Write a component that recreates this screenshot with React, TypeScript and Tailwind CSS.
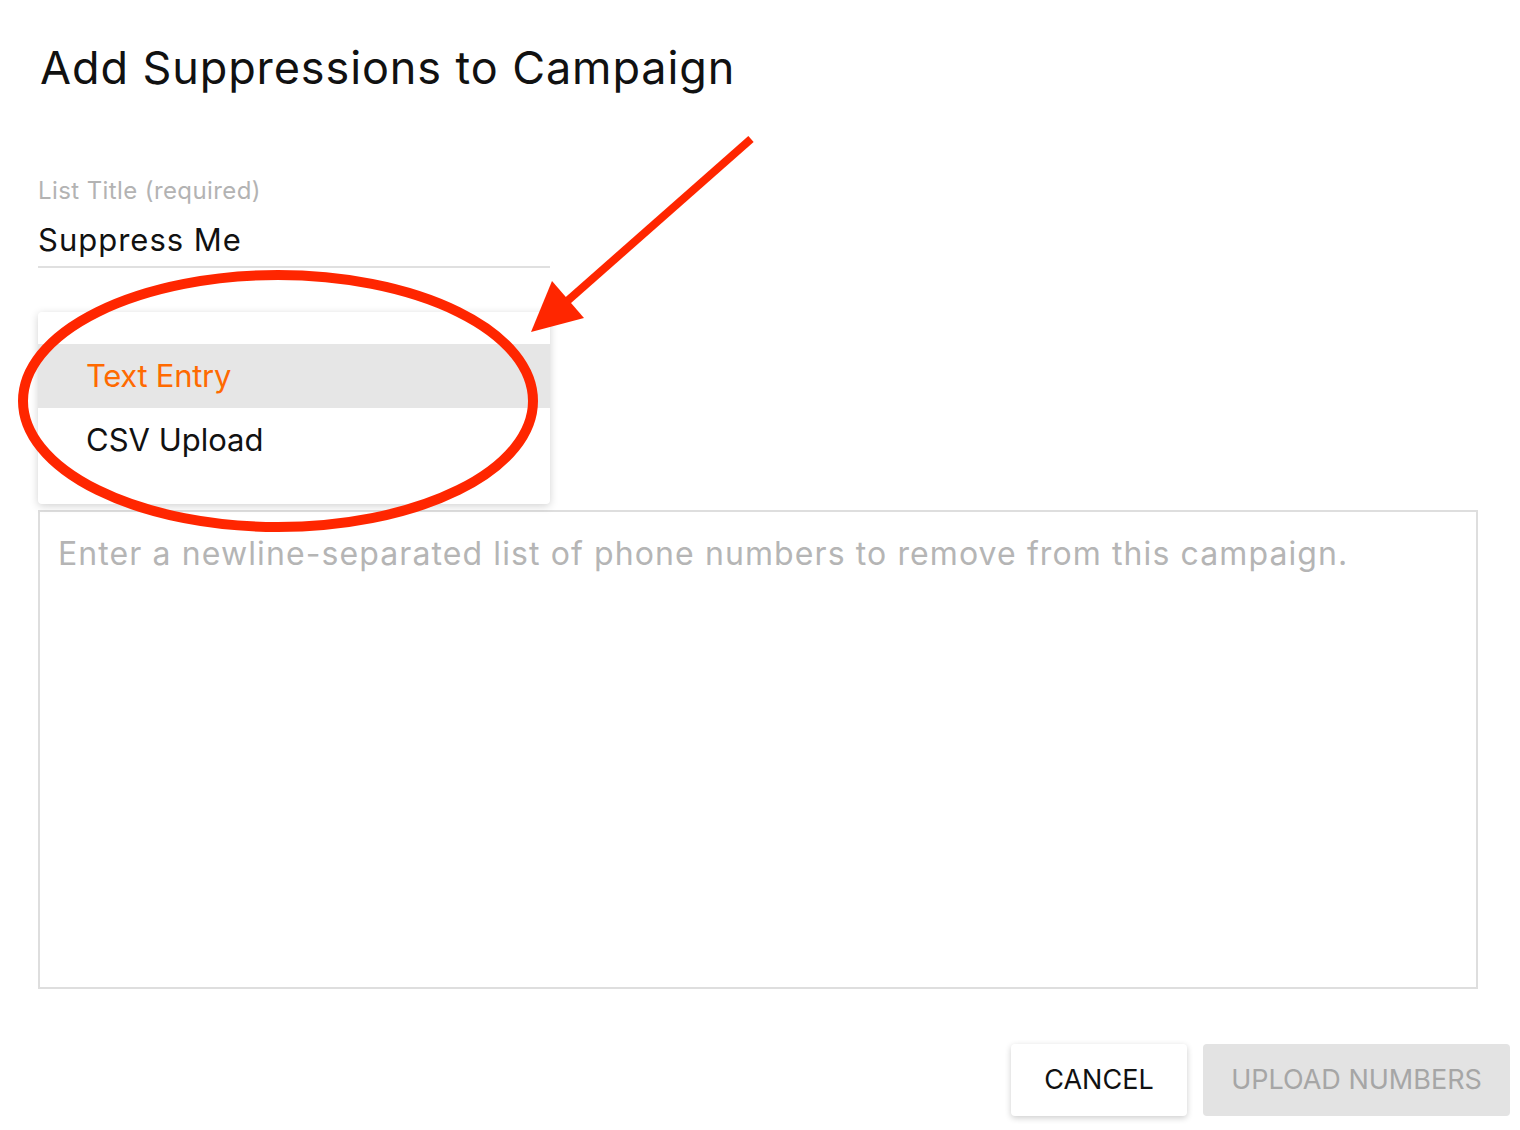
import React from 'react';

const font = { fontFamily: 'Inter, "Noto Sans", sans-serif' };

const Annotations: React.FC = () => (
    <svg className="pointer-events-none absolute inset-0" width={1520} height={1130} viewBox="0 0 1520 1130">
        <ellipse cx={278} cy={401} rx={255} ry={126} fill="none" stroke="#ff2600" strokeWidth={10} />
        <line x1={751} y1={139} x2={565} y2={303} stroke="#ff2600" strokeWidth={8} />
        <polygon points="531,332 552,281 584,318" fill="#ff2600" />
    </svg>
);

export default function App() {
    return (
        <div className="relative h-[1130px] w-[1520px] overflow-hidden bg-white" style={font}>
            <div className="flex h-full flex-col pl-[38px] pr-[10px]">
                <h1 className="mt-[38px] pl-[2px] text-[45px] leading-[60px] font-normal tracking-[0.9px] text-[#111]">
                    Add Suppressions to Campaign
                </h1>

                <div className="mt-[77px] w-[512px]">
                    <label className="block text-[24px] leading-[32px] tracking-[0.4px] text-[#b3b3b3]">List Title (required)</label>
                    <div className="mt-[13px] border-b-2 border-[#e0e0e0] pb-[6px] text-[31px] leading-[40px] tracking-[1px] text-[#111]">
                        Suppress Me
                    </div>
                </div>

                <div className="relative h-[242px] w-[512px]">
                    <div className="absolute left-0 top-[44px] w-[512px] rounded-[4px] bg-white py-[32px] shadow-[0_2px_8px_rgba(0,0,0,0.18)]">
                        <div className="flex h-[64px] items-center bg-[#e6e6e6] pl-[48px] text-[31px] tracking-[-0.3px] text-[#ff6a00]">
                            Text Entry
                        </div>
                        <div className="flex h-[64px] items-center pl-[48px] text-[31px] text-[#111]">
                            CSV Upload
                        </div>
                    </div>
                </div>

                <textarea
                    className="h-[479px] w-[1440px] resize-none border-2 border-[#dedede] px-[18px] py-[20px] text-[32px] leading-[44px] tracking-[1.1px] outline-none placeholder:text-[#b5b5b5]"
                    placeholder="Enter a newline-separated list of phone numbers to remove from this campaign."
                />

                <div className="mt-[55px] flex justify-end gap-[16px]">
                    <button className="h-[72px] w-[176px] rounded-[4px] bg-white text-[27px] text-[#111] shadow-[0_2px_6px_rgba(0,0,0,0.2)]">
                        CANCEL
                    </button>
                    <button className="h-[72px] w-[307px] rounded-[4px] bg-[#e3e3e3] text-[27px] text-[#a6a6a6]" disabled>
                        UPLOAD NUMBERS
                    </button>
                </div>
            </div>
            <Annotations />
        </div>
    );
}
